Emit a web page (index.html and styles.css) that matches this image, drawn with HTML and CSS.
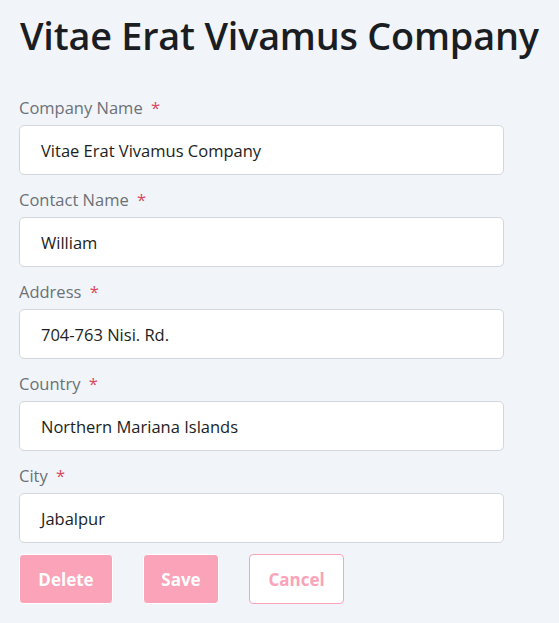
FILE: index.html
```html
<!DOCTYPE html>
<html lang="en">
<head>
<meta charset="utf-8">
<title>Vitae Erat Vivamus Company</title>
<link rel="stylesheet" href="styles.css">
</head>
<body>
<main class="page">
  <h1 class="title">Vitae Erat Vivamus Company</h1>
  <form class="form">
    <div class="field">
      <label class="label">Company Name <span class="req">*</span></label>
      <div class="input">Vitae Erat Vivamus Company</div>
    </div>
    <div class="field">
      <label class="label">Contact Name <span class="req">*</span></label>
      <div class="input">William</div>
    </div>
    <div class="field">
      <label class="label">Address <span class="req">*</span></label>
      <div class="input">704-763 Nisi. Rd.</div>
    </div>
    <div class="field">
      <label class="label">Country <span class="req">*</span></label>
      <div class="input">Northern Mariana Islands</div>
    </div>
    <div class="field">
      <label class="label">City <span class="req">*</span></label>
      <div class="input">Jabalpur</div>
    </div>
    <div class="actions">
      <button type="button" class="btn btn-fill btn-delete">Delete</button>
      <button type="button" class="btn btn-fill btn-save">Save</button>
      <button type="button" class="btn btn-outline btn-cancel">Cancel</button>
    </div>
  </form>
</main>
</body>
</html>
```
FILE: styles.css
```css
html, body {
  margin: 0;
  padding: 0;
  background: #f1f5f9;
}
body {
  font-family: "Open Sans", "Noto Sans", sans-serif;
  color: #1b1e22;
}
.page {
  padding: 11px 19px 0 19px;
}
.title {
  margin: 0 0 35px 1px;
  font-size: 37.8px;
  font-weight: 600;
  line-height: 50px;
  color: #1a1d21;
  letter-spacing: -0.2px;
  white-space: nowrap;
}
.form {
  display: flex;
  flex-direction: column;
  gap: 13px;
  width: 485px;
}
.field {
  display: flex;
  flex-direction: column;
  gap: 5px;
}
.label {
  font-size: 16.5px;
  line-height: 24px;
  color: #6c7077;
}
.req {
  color: #e0455b;
  margin-left: 4px;
}
.input {
  box-sizing: border-box;
  height: 50px;
  background: #fff;
  border: 1px solid #d3d6dc;
  border-radius: 5px;
  padding: 0 21px;
  display: flex;
  align-items: center;
  font-size: 16.5px;
  color: #1b1e22;
}
.actions {
  display: flex;
  gap: 30px;
  margin-top: -2px;
}
.btn {
  box-sizing: border-box;
  height: 50px;
  border-radius: 4px;
  font-family: inherit;
  font-size: 17px;
  font-weight: 700;
  padding: 0;
  cursor: pointer;
}
.btn-fill {
  background: #fba3b8;
  border: 1px solid #ffffff;
  color: #ffffff;
}
.btn-delete { width: 94px; }
.btn-save { width: 76px; }
.btn-outline {
  background: #ffffff;
  border: 1px solid #fba3b8;
  color: #fba3b8;
  width: 95px;
}
```
